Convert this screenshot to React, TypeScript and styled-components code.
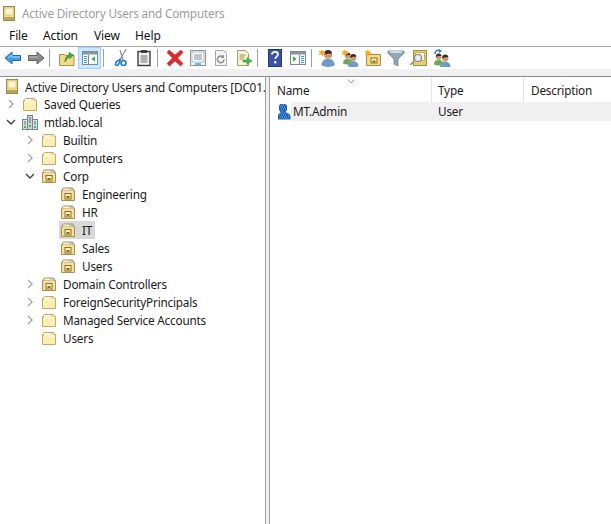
import React from "react";
import styled, { createGlobalStyle } from "styled-components";

const Global = createGlobalStyle`
  html, body { margin: 0; padding: 0; background: #fff; }
  body { font-family: "Noto Sans", "Liberation Sans", sans-serif; color: #1a1a1a; overflow: hidden; }
  svg { display: block; flex: none; }
`;

const Window = styled.div`
  width: 611px; height: 524px; display: flex; flex-direction: column; background: #fff; overflow: hidden;
`;
const TitleBar = styled.div`
  height: 26px; display: flex; align-items: center; gap: 7px; padding-left: 3px; flex: none;
`;
const TitleText = styled.span`
  font-size: 11.75px; color: #9c9c9c; letter-spacing: -0.2px; white-space: nowrap;
`;
const MenuBar = styled.div`
  height: 18px; padding-bottom: 2px; display: flex; align-items: center; flex: none; border-bottom: 1px solid #a9a9a9; box-sizing: content-box;
`;
const MenuItem = styled.span<{ $w: number }>`
  width: ${p => p.$w}px; font-size: 12px; letter-spacing: -0.1px; padding-left: 9px; box-sizing: border-box; color: #111;
`;
const Toolbar = styled.div`
  height: 22px; display: flex; align-items: center; padding-left: 1px; flex: none;
`;
const ToolButton = styled.div<{ $active?: boolean }>`
  width: 23px; height: 22px; box-sizing: border-box; display: flex; align-items: center; justify-content: center;
  background: ${p => (p.$active ? "#cce8ff" : "transparent")};
  border: 1px solid ${p => (p.$active ? "#99d1ff" : "transparent")};
`;
const ToolSep = styled.div<{ $tight?: boolean }>`
  width: 1px; height: 18px; background: #a0a0a0; margin: 0 ${p => (p.$tight ? 3 : 5)}px 0 2px;
`;
const Band = styled.div`
  height: 7px; background: #f0f0f0; flex: none; border-bottom: 1px solid #8c8c8c;
`;
const Panes = styled.div`
  flex: 1; display: flex; min-height: 0;
`;
const TreePane = styled.div`
  width: 265px; flex: none; border-right: 1px solid #a0a0a0; box-sizing: content-box; overflow: hidden;
`;
const Splitter = styled.div`
  width: 3px; flex: none; background: #f0f0f0; border-right: 1px solid #a0a0a0;
`;
const Row = styled.div<{ $level: number }>`
  height: 18px; display: flex; align-items: center; padding-left: ${p => 5 + p.$level * 19}px; white-space: nowrap;
`;
const ChevronSlot = styled.div`
  width: 12px; height: 18px; margin-right: 4px; flex: none; display: flex; align-items: center; justify-content: center;
`;
const ItemBody = styled.div<{ $selected?: boolean }>`
  height: 18px; display: flex; align-items: center; gap: 6px; padding: 0 3px 0 1px;
  background: ${p => (p.$selected ? "#d9d9d9" : "transparent")};
`;
const Label = styled.span`
  font-size: 11.75px; color: #1a1a1a; letter-spacing: -0.2px;
`;
const RootRow = styled.div`
  height: 18px; box-sizing: border-box; padding-top: 1px; display: flex; align-items: center; gap: 7px; padding-left: 6px; white-space: nowrap;
`;
const ListPane = styled.div`
  flex: 1; min-width: 0; display: flex; flex-direction: column;
`;
const Header = styled.div`
  height: 25px; display: flex; flex: none; position: relative;
`;
const HeaderCell = styled.div<{ $w: number }>`
  width: ${p => p.$w}px; flex: none; box-sizing: border-box; padding: 1px 0 0 ${p => (p.$w === 92 ? 6 : 7)}px;
  font-size: 11.75px; letter-spacing: -0.2px; border-right: 1px solid #e5e5e5; display: flex; align-items: center; color: #1a1a1a;
`;
const SortCaret = styled.svg`
  position: absolute; left: 77px; top: 2px;
`;
const ListRow = styled.div`
  height: 19px; display: flex; align-items: center; padding-left: 7px;
`;
const NameIcon = styled.div`
  width: 14px; height: 19px; flex: none; display: flex; align-items: center;
`;
const ListRowFill = styled.div`
  flex: 1; height: 19px; box-sizing: border-box; padding: 0 0 1px 2px; background: #f0f0f0; display: flex; align-items: center;
`;
const NameCell = styled.span`
  width: 145px; font-size: 11.75px; letter-spacing: -0.2px; color: #1a1a1a; flex: none;
`;
const TypeCell = styled.span`
  font-size: 11.75px; letter-spacing: -0.2px; color: #1a1a1a;
`;

const Console = () => (
  <svg width="12" height="15" viewBox="0 0 12 15">
    <rect x="0.5" y="0.5" width="11" height="14" fill="#f0dc8c" stroke="#9c8a48" />
    <rect x="2" y="2" width="8" height="7" fill="#fbf5cf" stroke="#c9b76e" strokeWidth="0.6" />
    <rect x="1" y="11" width="10" height="3" fill="#b8a45a" />
  </svg>
);
const Folder = () => (
  <svg width="16" height="15" viewBox="0 0 16 15">
    <path d="M1.500 3.500h13v10h-13z" fill="#fbeeb3" stroke="#c2ab68" />
    <path d="M2.500 4.500V2.500l1-1h9l1 1v1" fill="#fdf7d6" stroke="#c2ab68" />
    <path d="M9 2.500h4" stroke="#e8e0c0" />
    <path d="M2.500 5h11" stroke="#fffbe6" />
  </svg>
);
const OUFolder = () => (
  <svg width="16" height="15" viewBox="0 0 16 15">
    <path d="M1.500 3.500h13v10h-13z" fill="#f5dfa0" stroke="#a89150" />
    <path d="M2.500 3.500V2l1-1h9l1 1v1.500" fill="#fdf7d6" stroke="#a89150" />
    <path d="M9 2h4" stroke="#7aa7d0" />
    <rect x="5" y="6.500" width="6" height="5.500" fill="#fff3c4" stroke="#8a7020" />
    <rect x="6.500" y="9" width="3" height="2" fill="#8a6d10" />
  </svg>
);
const Domain = () => (
  <svg width="16" height="15" viewBox="0 0 16 15">
    <rect x="5.500" y="0.500" width="5" height="14" fill="#c9d4da" stroke="#75858f" />
    <rect x="0.500" y="4.500" width="5" height="10" fill="#dbe3e7" stroke="#75858f" />
    <rect x="10.500" y="4.500" width="5" height="10" fill="#dbe3e7" stroke="#75858f" />
    <path d="M7 3h2M7 5h2M7 7h2M2 7h2M12 7h2M2 9h2M12 9h2" stroke="#5f6f79" />
    <rect x="2" y="11" width="2" height="2" fill="#3fbf3f" />
    <rect x="7" y="10" width="2" height="2" fill="#3fbf3f" />
    <rect x="12" y="11" width="2" height="2" fill="#3fbf3f" />
  </svg>
);
const User = () => (
  <svg width="14" height="17" viewBox="0 0 14 17">
    <path d="M3 1h6l1 2v4L8.500 9l4 2 1 2v3.500H1V12l2.500-3L2 7V3z" fill="#1f5fb4" />
    <path d="M4 2h1M6 2h1M8 2h1M3 4h1M5 4h1M7 4h1M4 6h1M6 6h1M8 6h1M5 8h1M3 10h1M5 10h1M7 10h1M9 10h1M11 12h1M2 12h1M4 12h1M6 12h1M8 12h1M3 14h1M5 14h1M7 14h1M9 14h1M11 14h1M2 16h1M4 16h1M6 16h1M8 16h1M10 16h1" stroke="#7fb4ec" />
  </svg>
);
const Chevron = ({ open }: { open?: boolean }) => (
  <svg width="10" height="10" viewBox="0 0 10 10">
    {open ? (
      <path d="M1 3l4 4 4-4" fill="none" stroke="#404040" strokeWidth="1.400" />
    ) : (
      <path d="M3 1l4 4-4 4" fill="none" stroke="#a6a6a6" strokeWidth="1.400" />
    )}
  </svg>
);

const Person = ({ x = 0, y = 0, shirt = "#6f9cc4", s = 1 }: { x?: number; y?: number; shirt?: string; s?: number }) => (
  <g transform={`translate(${x} ${y}) scale(${s})`}>
    <path d="M0 13c0-4 2-5.500 5.500-5.500S11 9 11 13c-3 1.500-8 1.500-11 0z" fill={shirt} />
    <circle cx="5.500" cy="4" r="3.300" fill="#c9986e" />
    <path d="M2.200 4c0-3 1.500-4 3.300-4s3.300 1 3.300 3c-2 0-4 0-6.600 1z" fill="#3a2a20" />
  </g>
);
const Star = ({ x = 0, y = 0 }: { x?: number; y?: number }) => (
  <path transform={`translate(${x} ${y})`} d="M4 0l.9 2.400L7.500 1.500 6 3.600 8 4.800 5.300 5 4.500 7.500 3 5.300.5 6l1.500-2L.3 2 3 2.300z" fill="#f7a823" />
);

const I = ({ children }: { children: React.ReactNode }) => (
  <svg width="18" height="18" viewBox="0 0 18 18">{children}</svg>
);

const Back = () => (
  <I><path d="M1 9l7-6v3.500h8.500v5H8V15z" fill="#3f9ce8" stroke="#1d6db5" /><path d="M4 9l4-3v2h8" fill="none" stroke="#a8dcff" /></I>
);
const Forward = () => (
  <I><path d="M17 9l-7-6v3.500H1.500v5H10V15z" fill="#8a8a8a" stroke="#5f5f5f" /><path d="M2 8h9" stroke="#bdbdbd" /></I>
);
const Up = () => (
  <I>
    <path d="M1.500 5.500h5l1 1h8.500v10h-14.500z" fill="#f2d98c" stroke="#a98f45" />
    <path d="M7 13c0-4 1.500-6 4-7V3.500L15.500 6 12 9.500V8c-2 .5-3.500 2-5 5z" fill="#3fae3f" stroke="#1f7d1f" strokeWidth=".6" />
  </I>
);
const ShowTree = () => (
  <I>
    <rect x="1.500" y="2.500" width="15" height="13" fill="#f4f8fb" stroke="#7f8b94" />
    <path d="M2 3h14v2.500H2z" fill="#8b97a0" />
    <path d="M7.500 6v9" stroke="#7f8b94" />
    <path d="M3 7.500h3M3 9.500h3M3 11.500h3M3 13.500h3" stroke="#4b8fce" />
    <path d="M14 7.500v5L10.500 10z" fill="#2fa84f" />
  </I>
);
const Cut = () => (
  <I>
    <path d="M14 0L8 11M8 1l3 10" stroke="#8a8f94" strokeWidth="1.200" />
    <path d="M8 10.500c-2 1-4.500 2.500-4.500 4.500 0 1.500 2 2 3 .5S8 12 8 10.500z" fill="none" stroke="#1f78d8" strokeWidth="1.600" />
    <circle cx="11.500" cy="14" r="2.500" fill="none" stroke="#1f78d8" strokeWidth="1.600" />
  </I>
);
const Paste = () => (
  <I>
    <rect x="3" y="2.500" width="12" height="14" fill="#f4f4f4" stroke="#3c3c3c" strokeWidth="1.400" />
    <rect x="6" y="1" width="6" height="3" fill="#3c3c3c" />
    <path d="M5.500 7h7M5.500 9h7M5.500 11h7M5.500 13h7" stroke="#6a6a6a" />
  </I>
);
const Delete = () => (
  <I>
    <path d="M3 1l6 5 6-5 2 2.500L11.500 9l5.500 5.500-2.500 2.500L9 12l-5.500 5L1 14.500 6.500 9 1 3.500z" fill="#e02828" stroke="#a81c1c" strokeWidth=".5" />
  </I>
);
const Props = () => (
  <I>
    <rect x="1.500" y="1.500" width="15" height="15" fill="#f2f4f6" stroke="#8a949c" />
    <rect x="3" y="3" width="12" height="10" fill="#fff" stroke="#b7bec4" />
    <path d="M5 6h8M5 8h8M5 10h8" stroke="#7f8b94" />
    <path d="M6 15h6" stroke="#3fa0e0" strokeWidth="1.500" />
  </I>
);
const Refresh = () => (
  <I>
    <path d="M3.500 1.500h8l3 3v12h-11z" fill="#f4f4f4" stroke="#a8a8a8" />
    <path d="M12 10.500a3.300 3.300 0 1 1-1-2.500" fill="none" stroke="#8e8e8e" strokeWidth="1.500" />
    <path d="M12 5.500v3.500H8.500z" fill="#8e8e8e" />
  </I>
);
const ExportIc = () => (
  <I>
    <path d="M2.500 1.500h8l3 3v12h-11z" fill="#fbf3cf" stroke="#a89c70" />
    <path d="M4.500 6h6M4.500 8h5M4.500 10h4" stroke="#9c8f5e" />
    <path d="M8 11h4V8.500l5 3.500-5 3.500V13H8z" fill="#4fb84f" stroke="#2b8a2b" strokeWidth=".5" />
  </I>
);
const Help = () => (
  <svg width="14" height="18" viewBox="0 0 14 18">
    <rect x="0.500" y="0.500" width="13" height="17" fill="#3b53a8" stroke="#27377c" />
    <path d="M4 5.500c0-1.800 1.300-2.700 3-2.700 1.900 0 3 1.100 3 2.500 0 2.300-2.800 2.300-2.800 4.700" fill="none" stroke="#fff" strokeWidth="1.800" />
    <rect x="6.200" y="12" width="2.100" height="2.400" fill="#fff" />
  </svg>
);
const Mmc = () => (
  <I>
    <rect x="1.500" y="2.500" width="15" height="13" fill="#f4f8fb" stroke="#7f8b94" />
    <path d="M2 3h14v2.500H2z" fill="#8b97a0" />
    <path d="M10.500 6v9" stroke="#7f8b94" />
    <path d="M4 7.500v5l3.500-2.500z" fill="#2fa84f" />
    <path d="M12 7.500h3M12 9.500h3M12 11.500h3M12 13.500h3" stroke="#4b8fce" />
  </I>
);
const NewUser = () => (
  <I><Person x={3.500} y={1} s={1.200} /><Star x={0} y={0} /></I>
);
const NewGroup = () => (
  <I>
    <Person x={2} y={3.500} shirt="#6fa85a" s={0.85} />
    <Person x={7} y={5} s={0.95} />
    <Star x={0} y={0} />
  </I>
);
const NewOU = () => (
  <I>
    <path d="M2.500 5.500h14v11h-14z" fill="#f2d98c" stroke="#a98f45" />
    <rect x="7" y="9" width="6" height="5" fill="#fff3c4" stroke="#8a7020" />
    <rect x="8.500" y="11.500" width="3" height="2" fill="#8a6d10" />
    <Star x={0} y={0} />
  </I>
);
const Filter = () => (
  <I>
    <path d="M1 2h16v2l-6 6v7l-4-2v-5L1 4z" fill="#8fa7b8" stroke="#5f7686" strokeWidth=".7" />
    <ellipse cx="9" cy="3" rx="7" ry="1" fill="#d4e0e8" />
  </I>
);
const FindIc = () => (
  <I>
    <rect x="3.500" y="1.500" width="13" height="15" fill="#e8cd78" stroke="#a88f3c" />
    <rect x="5.500" y="3.500" width="9" height="8" fill="#fff8d8" stroke="#c4ae62" />
    <path d="M3 13l-2.500 3" stroke="#8a8a8a" strokeWidth="1.600" />
    <circle cx="8" cy="9" r="3.500" fill="#e6f0f6" stroke="#7f8b94" strokeWidth="1.200" />
  </I>
);
const Move = () => (
  <I>
    <Person x={1} y={4.500} shirt="#6fa85a" s={0.85} />
    <Person x={7} y={5.500} s={0.95} />
    <path d="M2 5c0-3 2-4.500 5-3.500" fill="none" stroke="#1f78d8" strokeWidth="1.500" />
    <path d="M6 0l3 2-3 2z" fill="#1f78d8" />
  </I>
);

const tree: { label: string; level: number; kind: "folder" | "ou" | "domain"; chev?: "open" | "closed"; selected?: boolean }[] = [
  { label: "Saved Queries", level: 0, kind: "folder", chev: "closed" },
  { label: "mtlab.local", level: 0, kind: "domain", chev: "open" },
  { label: "Builtin", level: 1, kind: "folder", chev: "closed" },
  { label: "Computers", level: 1, kind: "folder", chev: "closed" },
  { label: "Corp", level: 1, kind: "ou", chev: "open" },
  { label: "Engineering", level: 2, kind: "ou" },
  { label: "HR", level: 2, kind: "ou" },
  { label: "IT", level: 2, kind: "ou", selected: true },
  { label: "Sales", level: 2, kind: "ou" },
  { label: "Users", level: 2, kind: "ou" },
  { label: "Domain Controllers", level: 1, kind: "ou", chev: "closed" },
  { label: "ForeignSecurityPrincipals", level: 1, kind: "folder", chev: "closed" },
  { label: "Managed Service Accounts", level: 1, kind: "folder", chev: "closed" },
  { label: "Users", level: 1, kind: "folder" },
];

const kinds = { folder: Folder, ou: OUFolder, domain: Domain };

export default function App() {
  return (
    <Window>
      <Global />
      <TitleBar>
        <Console />
        <TitleText>Active Directory Users and Computers</TitleText>
      </TitleBar>
      <MenuBar>
        <MenuItem $w={34}>File</MenuItem>
        <MenuItem $w={51}>Action</MenuItem>
        <MenuItem $w={41}>View</MenuItem>
        <MenuItem $w={50}>Help</MenuItem>
      </MenuBar>
      <Toolbar>
        <ToolButton><Back /></ToolButton>
        <ToolButton><Forward /></ToolButton>
        <ToolSep />
        <ToolButton><Up /></ToolButton>
        <ToolButton $active><ShowTree /></ToolButton>
        <ToolSep />
        <ToolButton><Cut /></ToolButton>
        <ToolButton><Paste /></ToolButton>
        <ToolSep />
        <ToolButton><Delete /></ToolButton>
        <ToolButton><Props /></ToolButton>
        <ToolButton><Refresh /></ToolButton>
        <ToolButton><ExportIc /></ToolButton>
        <ToolSep />
        <ToolButton><Help /></ToolButton>
        <ToolButton><Mmc /></ToolButton>
        <ToolSep $tight />
        <ToolButton><NewUser /></ToolButton>
        <ToolButton><NewGroup /></ToolButton>
        <ToolButton><NewOU /></ToolButton>
        <ToolButton><Filter /></ToolButton>
        <ToolButton><FindIc /></ToolButton>
        <ToolButton><Move /></ToolButton>
      </Toolbar>
      <Band />
      <Panes>
        <TreePane>
          <RootRow>
            <Console />
            <Label>Active Directory Users and Computers [DC01.</Label>
          </RootRow>
          {tree.map((t, i) => {
            const Icon = kinds[t.kind];
            return (
              <Row key={i} $level={t.level}>
                <ChevronSlot>{t.chev && <Chevron open={t.chev === "open"} />}</ChevronSlot>
                <ItemBody $selected={t.selected}>
                  <Icon />
                  <Label>{t.label}</Label>
                </ItemBody>
              </Row>
            );
          })}
        </TreePane>
        <Splitter />
        <ListPane>
          <Header>
            <HeaderCell $w={162}>Name</HeaderCell>
            <HeaderCell $w={92}>Type</HeaderCell>
            <HeaderCell $w={88}>Description</HeaderCell>
            <SortCaret width="8" height="5" viewBox="0 0 8 5">
              <path d="M.5 .5l3.500 3.500 3.500-3.500" fill="none" stroke="#9a9a9a" />
            </SortCaret>
          </Header>
          <ListRow>
            <NameIcon><User /></NameIcon>
            <ListRowFill>
              <NameCell>MT.Admin</NameCell>
              <TypeCell>User</TypeCell>
            </ListRowFill>
          </ListRow>
        </ListPane>
      </Panes>
    </Window>
  );
}
